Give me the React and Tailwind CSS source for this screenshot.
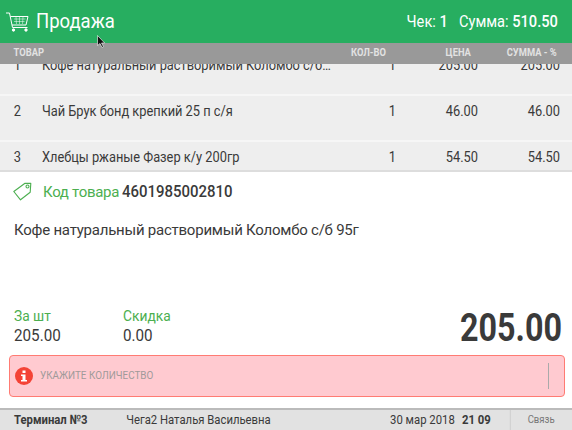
import React from 'react';

const ROWS = [
  { n: 1, name: 'Кофе натуральный растворимый Коломбо с/б 95г', qty: 1, price: '205.00', sum: '205.00' },
  { n: 2, name: 'Чай Брук бонд крепкий 25 п с/я', qty: 1, price: '46.00', sum: '46.00' },
  { n: 3, name: 'Хлебцы ржаные Фазер к/у 200гр', qty: 1, price: '54.50', sum: '54.50' },
];

const CartIcon = () => (
  <svg width="23" height="20" viewBox="0 0 23 20" fill="none" stroke="#fff" strokeWidth="1">
    <path d="M0 1h3.500l3 14.500h15" />
    <path d="M4.500 4.500h17.500l-2 8.500H6" />
    <path d="M8 7h11.500M8 9.500h10.500M10 5l.5 7M13.500 5v7M17 5l-.5 7" strokeWidth="0.5" />
    <circle cx="7.500" cy="18" r="1.200" fill="#fff" />
    <circle cx="20" cy="18" r="1.200" fill="#fff" />
  </svg>
);

const TagIcon = () => (
  <svg width="19" height="19" viewBox="0 0 19 19" fill="none" stroke="#4caf50" strokeWidth="1.100">
    <path d="M.8 9.500 12 1.200l5.800.2-.6 8.800L7.500 17.800z" strokeLinejoin="round" />
    <circle cx="14.500" cy="4.500" r="1.500" />
  </svg>
);

const AlertIcon = () => (
  <svg width="18" height="18" viewBox="0 0 18 18">
    <circle cx="9" cy="9" r="9" fill="#f44336" />
    <rect x="7.500" y="3.500" width="3" height="2.500" fill="#fff" />
    <path d="M6 7.500h4.500V13H12v1.500H6V13h1.500V9H6z" fill="#fff" />
  </svg>
);

const Cursor = () => (
  <svg className="absolute left-[97px] top-[35px]" width="9" height="13" viewBox="0 0 9 13">
    <path d="M.5.500v10l2.500-2 2 4 1.500-.8-2-3.700h3.200z" fill="#111" stroke="#fff" strokeWidth="0.6" />
  </svg>
);

export default function App() {
  return (
    <div className="relative w-[572px] h-[430px] flex flex-col overflow-hidden bg-white text-[#3a3a3a] font-['Roboto',sans-serif]">
      <header className="h-[43px] shrink-0 bg-[#27ae60] text-white flex items-center justify-between pl-[6px] pr-[14px]">
        <div className="flex items-center">
          <CartIcon />
          <span className="ml-[7px] text-[21px] origin-left scale-x-[.88]">Продажа</span>
        </div>
        <div className="flex items-center gap-[13px] text-[17px] origin-right scale-x-[.86]">
          <span>Чек: <b className="font-medium">1</b></span>
          <span>Сумма: <b className="font-medium">510.50</b></span>
        </div>
      </header>
      <Cursor />

      <div className="h-[21px] shrink-0 bg-[#999] overflow-hidden">
        <div className="w-[673px] h-full origin-left scale-x-[.85] text-[#e2e2e2] text-[11px] font-bold flex items-center">
          <div className="w-[394px] pl-[16px]">ТОВАР</div>
          <div className="w-[60px] text-right">КОЛ-ВО</div>
          <div className="w-[100px] text-right">ЦЕНА</div>
          <div className="w-[101px] text-right">СУММА - %</div>
        </div>
      </div>

      <div className="h-[108px] shrink-0 overflow-hidden bg-[#eee] border-b-2 border-[#ddd]">
        <div className="-mt-[14px] w-[669px] origin-left scale-x-[.855]">
          {ROWS.map((r) => (
            <div key={r.n} className="h-[46px] pt-[5px] flex items-start text-[15px] leading-[20px] border-b-2 border-[#f6f6f6]">
              <div className="w-[49px] pl-[16px]">{r.n}</div>
              <div className="w-[338px] truncate">{r.name}</div>
              <div className="w-[76px] text-right">{r.qty}</div>
              <div className="w-[96px] text-right">{r.price}</div>
              <div className="w-[96px] text-right">{r.sum}</div>
            </div>
          ))}
        </div>
      </div>

      <div className="flex-1 flex flex-col min-h-0">
        <div className="flex items-center mt-[7px] pl-[13px]">
          <TagIcon />
          <span className="ml-[11px] text-[15px] text-[#4caf50] tracking-[-0.3px]">Код товара</span>
          <span className="ml-[3px] text-[17px] font-medium origin-left scale-x-[.88]">4601985002810</span>
        </div>
        <div className="mt-[15px] pl-[14px] text-[15px] leading-[20px] tracking-[-0.23px]">Кофе натуральный растворимый Коломбо с/б 95г</div>

        <div className="mt-auto flex items-end justify-between px-[10px]">
          <div className="flex pl-[4px] mb-[2px]">
            <div className="w-[109px] leading-[19px]">
              <div className="text-[15.500px] text-[#4caf50] origin-left scale-x-[.89]">За шт</div>
              <div className="text-[16px] origin-left scale-x-[.95]">205.00</div>
            </div>
            <div className="leading-[19px]">
              <div className="text-[15.500px] text-[#4caf50] origin-left scale-x-[.89]">Скидка</div>
              <div className="text-[16px] origin-left scale-x-[.95]">0.00</div>
            </div>
          </div>
          <div className="text-[38px] leading-[38px] font-bold origin-right scale-x-[.85]">205.00</div>
        </div>

        <div className="mt-[8px] mb-[11px] ml-[9px] mr-[7px] h-[42px] rounded-[4px] bg-[#ffcad0] border border-[#ff7b73] flex items-center pl-[5px] pr-[15px]">
          <AlertIcon />
          <span className="ml-[7px] pt-px text-[11px] text-[#a09a9a] origin-left scale-x-[.9]">УКАЖИТЕ КОЛИЧЕСТВО</span>
          <div className="ml-auto w-px h-[26px] bg-[#aaa]"></div>
        </div>
      </div>

      <footer className="h-[22px] shrink-0 bg-[#e2e2e2] border-t-2 border-[#bbb] overflow-hidden">
        <div className="w-[657px] h-full origin-left scale-x-[.87] flex items-center text-[13px]">
          <div className="w-[145px] pl-[16px] font-bold">Терминал №3</div>
          <div>Чега2 Наталья Васильевна</div>
          <div className="ml-auto mr-[22px]">30 мар 2018 <b className="ml-[5px]">21 09</b></div>
          <div className="w-[71px] h-full flex items-center justify-center border-l border-[#ccc] text-[#777] text-[11px]">Связь</div>
        </div>
      </footer>
    </div>
  );
}
